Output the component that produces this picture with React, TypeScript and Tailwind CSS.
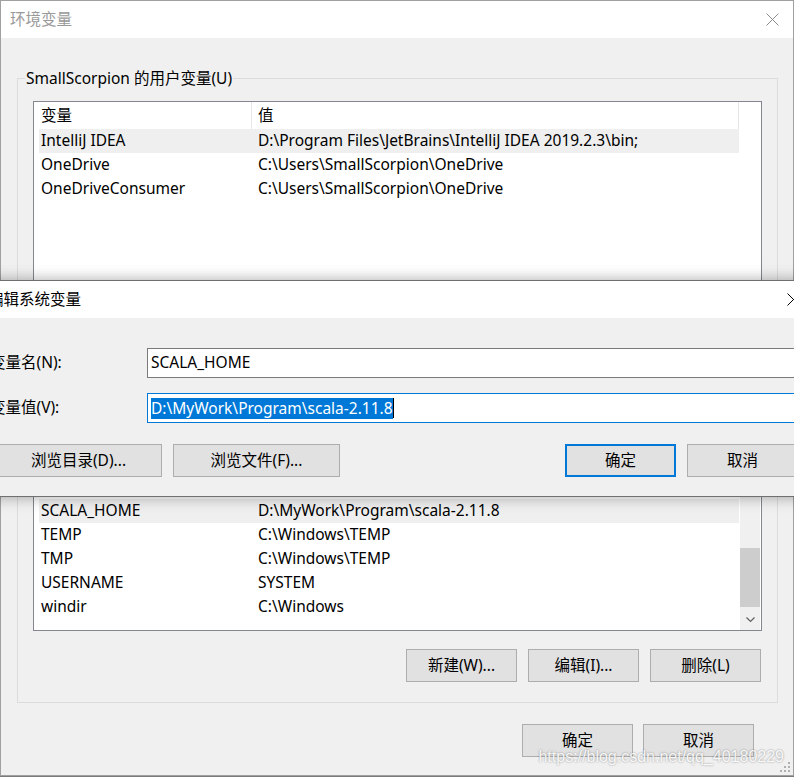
import React from "react";

type Row = { name: string; value: string };

const userVars: Row[] = [
  { name: "IntelliJ IDEA", value: "D:\\Program Files\\JetBrains\\IntelliJ IDEA 2019.2.3\\bin;" },
  { name: "OneDrive", value: "C:\\Users\\SmallScorpion\\OneDrive" },
  { name: "OneDriveConsumer", value: "C:\\Users\\SmallScorpion\\OneDrive" },
];

// list is scrolled down, so the first visible rows sit under the edit dialog
const systemVars: Row[] = [
  { name: "PROCESSOR_IDENTIFIER", value: "Intel64 Family 6 Model 158 Stepping 10, GenuineIntel" },
  { name: "PROCESSOR_LEVEL", value: "6" },
  { name: "PROCESSOR_REVISION", value: "9e0a" },
  { name: "PSModulePath", value: "%ProgramFiles%\\WindowsPowerShell\\Modules;C:\\Windows\\system32\\WindowsPowerShell\\v1.0\\Modules" },
  { name: "SCALA_HOME", value: "D:\\MyWork\\Program\\scala-2.11.8" },
  { name: "TEMP", value: "C:\\Windows\\TEMP" },
  { name: "TMP", value: "C:\\Windows\\TEMP" },
  { name: "USERNAME", value: "SYSTEM" },
  { name: "windir", value: "C:\\Windows" },
];

function CloseIcon({ className }: { className?: string }) {
  return (
    <svg width="13" height="13" viewBox="0 0 13 13" className={className}>
      <path d="M0.5 0.5 L12.5 12.5 M12.5 0.5 L0.5 12.5" stroke="currentColor" strokeWidth="1" fill="none" />
    </svg>
  );
}

function Chevron({ up }: { up?: boolean }) {
  return (
    <svg width="9" height="6" viewBox="0 0 9 6">
      <path d={up ? "M0.5 5.5 L4.5 1.5 L8.5 5.5" : "M0.5 0.5 L4.5 4.5 L8.5 0.5"} stroke="#606060" strokeWidth="1.2" fill="none" />
    </svg>
  );
}

function Btn({ children, focused }: { children: React.ReactNode; focused?: boolean }) {
  return (
    <div
      className={`flex h-[33px] w-[111px] shrink-0 items-center justify-center bg-[#e1e1e1] ${
        focused ? "border-2 border-[#0078d7]" : "border border-[#adadad]"
      }`}
    >
      {children}
    </div>
  );
}

function Scrollbar() {
  return (
    <div className="mr-[1px] flex w-[20px] shrink-0 flex-col bg-[#f0f0f0]">
      <div className="flex h-[20px] items-center justify-center">
        <Chevron up />
      </div>
      <div className="flex-1 pt-[152px]">
        <div className="h-[59px] bg-[#cdcdcd]" />
      </div>
      <div className="flex h-[21px] items-center justify-center">
        <Chevron />
      </div>
    </div>
  );
}

function VarList({ rows, selected, height, scroll }: { rows: Row[]; selected: number; height: string; scroll?: boolean }) {
  return (
    <div className={`flex overflow-hidden border border-[#828790] bg-white ${height}`}>
      <div className="flex min-w-0 flex-1 flex-col">
        <div className="flex h-[27px] shrink-0 leading-[27px]">
          <div className="w-[218px] border-r border-[#e5e5e5] pl-[7px]">变量</div>
          <div className="w-[487px] border-r border-[#e5e5e5] pl-[6px]">值</div>
        </div>
        {rows.map((row, i) => (
          <div
            key={row.name}
            className={`ml-[5px] flex h-[24px] w-[700px] shrink-0 items-center whitespace-nowrap ${
              i === selected ? "bg-[#efefef]" : ""
            }`}
          >
            <div className="w-[212px] overflow-hidden pl-[2px]">{row.name}</div>
            <div className="min-w-0 flex-1 overflow-hidden pl-[7px]">{row.value}</div>
          </div>
        ))}
      </div>
      {scroll && <Scrollbar />}
    </div>
  );
}

function Group({ label, className, children }: { label: string; className: string; children: React.ReactNode }) {
  return (
    <div className={`relative border border-[#dcdcdc] px-[15px] pt-[22px] ${className}`}>
      <span className="absolute left-[7px] top-[-11px] bg-[#f0f0f0] px-[1px] leading-[20px]">{label}</span>
      {children}
      <div className="mt-[18px] flex justify-end gap-[11px] pr-[1px]">
        <Btn>新建(W)...</Btn>
        <Btn>编辑(I)...</Btn>
        <Btn>删除(L)</Btn>
      </div>
    </div>
  );
}

function EditDialog() {
  return (
    <div className="absolute left-[-22px] top-[280px] flex h-[217px] w-[838px] flex-col border border-[#707070] bg-[#f0f0f0] shadow-[0_0_14px_rgba(0,0,0,0.35)]">
      <div className="flex h-[37px] shrink-0 items-center justify-between bg-white pl-[9px] pr-[15px]">
        <span>编辑系统变量</span>
        <CloseIcon className="text-black" />
      </div>
      <div className="flex items-center pl-[11px] pt-[30px]">
        <div className="w-[157px] shrink-0">变量名(N):</div>
        <div className="flex h-[30px] w-[652px] items-center border border-[#7a7a7a] bg-white pl-[3px]">SCALA_HOME</div>
      </div>
      <div className="mt-[15px] flex items-center pl-[11px]">
        <div className="w-[157px] shrink-0">变量值(V):</div>
        <div className="flex h-[30px] w-[652px] items-center border border-[#0078d7] bg-white pl-[3px]">
          <span className="bg-[#0078d7] leading-[21px] text-white">D:\MyWork\Program\scala-2.11.8</span>
          <span className="h-[20px] w-[1px] bg-black" />
        </div>
      </div>
      <div className="mt-[21px] flex justify-between pl-[16px] pr-[17px]">
        <div className="flex gap-[11px]">
          <div className="flex h-[33px] w-[167px] items-center justify-center border border-[#adadad] bg-[#e1e1e1]">浏览目录(D)...</div>
          <div className="flex h-[33px] w-[167px] items-center justify-center border border-[#adadad] bg-[#e1e1e1]">浏览文件(F)...</div>
        </div>
        <div className="flex gap-[11px]">
          <Btn focused>确定</Btn>
          <Btn>取消</Btn>
        </div>
      </div>
    </div>
  );
}

export default function App() {
  return (
    <div className="relative h-[777px] w-[794px] overflow-hidden bg-[#7a7a7a] font-['Noto_Sans','Noto_Sans_CJK_SC',sans-serif] text-[15.5px] text-black">
      <div className="flex h-[776px] w-[794px] flex-col border border-[#a0a0a0] bg-[#f0f0f0]">
        <div className="flex h-[37px] shrink-0 items-center justify-between bg-white pl-[9px] pr-[14px] text-[#999]">
          <span>环境变量</span>
          <CloseIcon className="text-[#8c8c8c]" />
        </div>

        <div className="flex flex-1 flex-col pl-[16px] pr-[15px]">
          <Group label="SmallScorpion 的用户变量(U)" className="mt-[40px] pb-[0px]">
            <VarList rows={userVars} selected={0} height="h-[180px]" />
          </Group>

          <Group label="系统变量(S)" className="mt-[19px] pb-[20px]">
            <VarList rows={systemVars} selected={4} height="h-[256px]" scroll />
          </Group>

          <div className="mt-[21px] flex justify-end gap-[10px] pr-[24px]">
            <Btn>确定</Btn>
            <Btn>取消</Btn>
          </div>
        </div>
      </div>

      <EditDialog />

      <span className="absolute bottom-[8px] right-[10px] font-['Liberation_Sans',sans-serif] text-[16px] text-white/90 [text-shadow:0_0_2px_rgba(0,0,0,0.45)]">
        https://blog.csdn.net/qq_40180229
      </span>
      <svg width="12" height="12" viewBox="0 0 12 12" className="absolute bottom-[4px] right-[3px]">
        <rect x="9" y="1" width="2" height="2" fill="#b0b0b0" />
        <rect x="5" y="5" width="2" height="2" fill="#b0b0b0" />
        <rect x="9" y="5" width="2" height="2" fill="#b0b0b0" />
        <rect x="1" y="9" width="2" height="2" fill="#b0b0b0" />
        <rect x="5" y="9" width="2" height="2" fill="#b0b0b0" />
        <rect x="9" y="9" width="2" height="2" fill="#b0b0b0" />
      </svg>
    </div>
  );
}
